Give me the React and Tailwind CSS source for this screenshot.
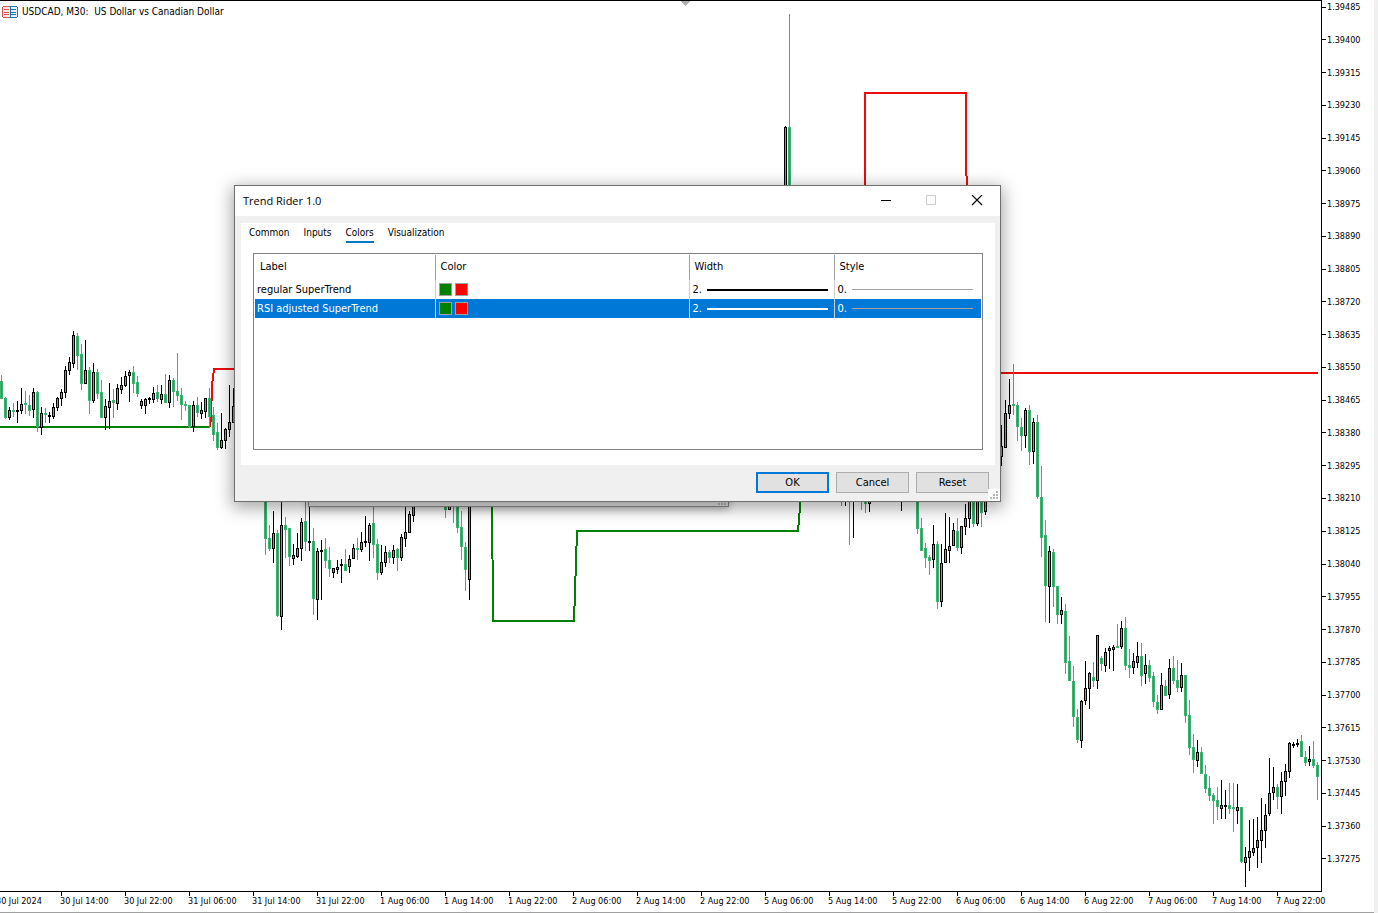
import clsx from 'clsx'

const prices = [
  '1.39485', '1.39400', '1.39315', '1.39230', '1.39145', '1.39060', '1.38975', '1.38890', '1.38805',
  '1.38720', '1.38635', '1.38550', '1.38465', '1.38380', '1.38295', '1.38210', '1.38125', '1.38040',
  '1.37955', '1.37870', '1.37785', '1.37700', '1.37615', '1.37530', '1.37445', '1.37360', '1.37275',
]

const times = [
  '30 Jul 2024', '30 Jul 14:00', '30 Jul 22:00', '31 Jul 06:00', '31 Jul 14:00', '31 Jul 22:00',
  '1 Aug 06:00', '1 Aug 14:00', '1 Aug 22:00', '2 Aug 06:00', '2 Aug 14:00', '2 Aug 22:00',
  '5 Aug 06:00', '5 Aug 14:00', '5 Aug 22:00', '6 Aug 06:00', '6 Aug 14:00', '6 Aug 22:00',
  '7 Aug 06:00', '7 Aug 14:00', '7 Aug 22:00',
]

// x, direction (1 up, 0 down), high, body top, body bottom, low
const candles = [
  [1, 0, 375, 381, 398, 398], [5, 0, 397, 398, 417, 418], [9, 1, 407, 410, 417, 419],
  [13, 0, 403, 410, 411, 416], [17, 1, 401, 410, 411, 422], [21, 1, 388, 404, 410, 413],
  [25, 0, 391, 403, 404, 413], [29, 0, 395, 405, 410, 415], [33, 1, 388, 392, 409, 417],
  [37, 0, 391, 392, 426, 431], [41, 1, 407, 413, 427, 434], [45, 0, 408, 413, 414, 422],
  [49, 1, 412, 415, 416, 422], [53, 1, 403, 407, 416, 418], [57, 1, 397, 398, 407, 410],
  [61, 1, 389, 392, 398, 405], [65, 1, 366, 370, 392, 397], [69, 1, 357, 362, 370, 374],
  [73, 1, 331, 335, 363, 367], [77, 0, 333, 336, 355, 369], [81, 0, 344, 354, 383, 389],
  [85, 1, 340, 370, 383, 383], [89, 0, 367, 370, 400, 413], [93, 1, 363, 372, 400, 402],
  [97, 0, 369, 372, 393, 398], [101, 0, 380, 392, 417, 417], [105, 1, 399, 406, 417, 429],
  [109, 1, 383, 401, 407, 428], [113, 0, 389, 400, 402, 417], [117, 1, 384, 388, 403, 409],
  [121, 1, 377, 385, 389, 393], [125, 1, 371, 376, 385, 386], [129, 1, 370, 372, 375, 401],
  [133, 0, 366, 372, 383, 392], [137, 0, 376, 382, 393, 396], [141, 1, 399, 401, 405, 408],
  [145, 1, 398, 399, 405, 413], [149, 1, 397, 398, 399, 403], [153, 1, 387, 393, 399, 402],
  [157, 0, 385, 392, 398, 401], [161, 1, 385, 394, 399, 403], [165, 0, 374, 394, 402, 402],
  [169, 1, 375, 380, 402, 407], [173, 0, 378, 380, 391, 406], [177, 0, 353, 391, 395, 400],
  [181, 0, 388, 395, 404, 419], [185, 0, 401, 404, 405, 410], [189, 0, 405, 405, 426, 427],
  [193, 1, 401, 405, 426, 431], [197, 0, 397, 405, 412, 416], [201, 1, 402, 410, 413, 418],
  [205, 1, 398, 398, 411, 417], [209, 0, 388, 398, 416, 427], [213, 0, 407, 415, 434, 440],
  [217, 0, 423, 432, 447, 449], [221, 1, 413, 440, 447, 448], [225, 1, 428, 429, 440, 448],
  [229, 1, 385, 422, 429, 436], [233, 1, 388, 406, 422, 422],
  [265, 0, 490, 490, 538, 554], [269, 0, 525, 538, 548, 550], [273, 1, 511, 533, 548, 562],
  [277, 0, 530, 533, 615, 616], [281, 1, 500, 525, 616, 629], [285, 0, 517, 525, 529, 557],
  [289, 0, 528, 528, 556, 565], [293, 1, 544, 555, 558, 564], [297, 1, 533, 548, 556, 557],
  [301, 1, 518, 522, 548, 560], [305, 0, 500, 521, 541, 550], [309, 1, 500, 541, 542, 550],
  [313, 0, 528, 541, 598, 614], [317, 1, 548, 551, 599, 619], [321, 1, 540, 550, 551, 599],
  [325, 0, 538, 549, 560, 567], [329, 0, 547, 560, 568, 576], [333, 1, 568, 568, 572, 577],
  [337, 1, 560, 567, 569, 573], [341, 1, 559, 564, 565, 582], [345, 0, 549, 564, 570, 570],
  [349, 1, 555, 559, 566, 572], [353, 1, 544, 548, 558, 558], [357, 0, 538, 548, 549, 559],
  [361, 1, 532, 542, 549, 551], [365, 1, 516, 541, 542, 546], [369, 1, 523, 525, 542, 560],
  [373, 0, 500, 523, 544, 557], [377, 0, 539, 544, 572, 579], [381, 1, 545, 562, 572, 574],
  [385, 1, 546, 552, 562, 566], [389, 0, 550, 552, 557, 562], [393, 1, 545, 550, 557, 563],
  [397, 0, 548, 549, 557, 570], [401, 1, 534, 537, 557, 560], [405, 1, 500, 532, 538, 546],
  [409, 1, 511, 514, 532, 532], [413, 1, 500, 500, 515, 521], [417, 1, 500, 500, 506, 506],
  [445, 0, 500, 500, 509, 517], [449, 1, 500, 500, 509, 509], [453, 0, 500, 500, 505, 522],
  [457, 0, 500, 500, 527, 532], [461, 0, 511, 527, 546, 559], [465, 0, 542, 547, 569, 590],
  [469, 1, 500, 500, 579, 599],
  [785, 1, 126, 127, 190, 190], [789, 0, 14, 127, 190, 190],
  [841, 0, 495, 495, 496, 505], [845, 1, 495, 495, 496, 505], [849, 0, 495, 495, 496, 544],
  [853, 1, 495, 495, 496, 537], [861, 0, 495, 495, 496, 509], [865, 0, 495, 495, 503, 512],
  [869, 1, 495, 495, 503, 511], [901, 1, 495, 495, 496, 510],
  [917, 0, 495, 495, 528, 533], [921, 0, 518, 528, 550, 550], [925, 0, 543, 548, 557, 567],
  [929, 0, 555, 557, 560, 574], [933, 1, 525, 544, 559, 567], [937, 0, 541, 544, 601, 608],
  [941, 1, 544, 563, 601, 606], [945, 1, 513, 549, 562, 562], [949, 1, 517, 546, 550, 562],
  [953, 1, 523, 530, 545, 545], [957, 0, 518, 531, 547, 550], [961, 1, 526, 526, 547, 553],
  [965, 1, 504, 518, 526, 534], [969, 1, 495, 495, 518, 527], [973, 0, 495, 495, 523, 526],
  [977, 1, 495, 495, 523, 525], [981, 0, 495, 495, 512, 526], [985, 1, 495, 495, 511, 514],
  [1001, 1, 425, 446, 456, 465], [1005, 1, 400, 413, 447, 447], [1009, 1, 379, 405, 413, 418],
  [1013, 0, 364, 404, 405, 414], [1017, 0, 402, 405, 426, 440], [1021, 0, 418, 427, 435, 450],
  [1025, 1, 408, 410, 435, 447], [1029, 0, 405, 410, 451, 464], [1033, 1, 418, 422, 451, 463],
  [1037, 0, 415, 422, 496, 498], [1041, 0, 466, 497, 537, 556], [1045, 0, 520, 535, 585, 621],
  [1049, 1, 546, 551, 586, 622], [1053, 0, 549, 552, 586, 606], [1057, 0, 586, 586, 614, 623],
  [1061, 1, 597, 610, 614, 623], [1065, 0, 604, 611, 662, 673], [1069, 0, 636, 661, 680, 680],
  [1073, 0, 666, 681, 716, 726], [1077, 0, 709, 717, 739, 742], [1081, 1, 700, 701, 740, 747],
  [1085, 1, 661, 688, 700, 704], [1089, 1, 672, 673, 688, 708], [1093, 0, 662, 677, 680, 686],
  [1097, 1, 635, 635, 680, 688], [1101, 0, 656, 658, 663, 670], [1105, 1, 648, 652, 665, 671],
  [1109, 1, 646, 648, 650, 668], [1113, 1, 645, 647, 649, 670], [1117, 0, 624, 646, 647, 647],
  [1121, 1, 621, 628, 646, 648], [1125, 0, 617, 628, 665, 669], [1129, 0, 649, 665, 667, 677],
  [1133, 1, 653, 661, 667, 673], [1137, 1, 642, 656, 662, 667], [1141, 0, 643, 656, 675, 685],
  [1145, 1, 654, 665, 673, 683], [1149, 0, 660, 665, 677, 681], [1153, 0, 672, 676, 701, 706],
  [1157, 0, 695, 702, 709, 713], [1161, 1, 673, 685, 709, 709], [1165, 0, 680, 686, 695, 695],
  [1169, 1, 659, 668, 694, 698], [1173, 0, 656, 668, 680, 683], [1177, 0, 660, 680, 687, 691],
  [1181, 1, 663, 675, 687, 691], [1185, 0, 675, 675, 715, 722], [1189, 0, 700, 715, 747, 754],
  [1193, 0, 734, 747, 759, 772], [1197, 1, 740, 752, 760, 766], [1201, 0, 747, 752, 773, 773],
  [1205, 0, 765, 774, 788, 792], [1209, 0, 776, 788, 795, 800], [1213, 0, 793, 795, 800, 823],
  [1217, 0, 787, 800, 806, 819], [1221, 1, 780, 805, 808, 818], [1225, 1, 790, 805, 806, 818],
  [1229, 0, 783, 805, 808, 813], [1233, 0, 783, 807, 808, 831], [1237, 1, 784, 807, 810, 823],
  [1241, 0, 807, 807, 861, 862], [1245, 1, 847, 857, 862, 886], [1249, 1, 820, 851, 857, 870],
  [1253, 1, 819, 848, 852, 855], [1257, 1, 817, 840, 847, 867], [1261, 1, 798, 830, 840, 862],
  [1265, 1, 804, 815, 830, 847], [1269, 1, 758, 793, 813, 815], [1273, 1, 767, 787, 792, 799],
  [1277, 0, 784, 787, 796, 808], [1281, 1, 772, 781, 796, 813], [1285, 1, 764, 771, 781, 795],
  [1289, 1, 742, 743, 771, 777], [1293, 1, 742, 744, 745, 747], [1297, 1, 739, 743, 744, 746],
  [1301, 0, 735, 741, 756, 756], [1305, 0, 751, 757, 762, 765], [1309, 1, 746, 759, 761, 765],
  [1313, 0, 741, 759, 765, 767], [1317, 0, 762, 765, 776, 799],
]

const plots = [
  { label: 'regular SuperTrend', selected: false },
  { label: 'RSI adjusted SuperTrend', selected: true },
]

function Candle({ data }) {
  const [x, up, high, top, bottom, low] = data
  const height = bottom - top + 1
  return (
    <g fill={up ? '#000000' : '#3cb371'}>
      <rect x={x} y={high} width="1" height={low - high + 1} />
      <rect x={x - 1} y={top} width="3" height={height} />
      {height > 2 && (
        <rect x={x} y={top + 1} width="1" height={height - 2} fill={up ? '#7d9c96' : '#d04a55'} />
      )}
    </g>
  )
}

function Chart() {
  return (
    <svg className="block h-[891px] w-[1321px] shrink-0" viewBox="0 0 1321 891" shapeRendering="crispEdges">
      <path d="M681 1h9l-4.500 5z" fill="#b0b0b0" />
      <g fill="none" strokeWidth="2" strokeLinejoin="round">
        <path d="M0 427H210" stroke="#008000" />
        <path d="M210 427L211 417L212 385L214 369H240" stroke="#ee0a0a" />
        <path d="M492 495L493 621H574L577 531H798L801 495" stroke="#008000" />
        <path d="M865 190V93H966V160L967 190M1000 373H1318" stroke="#ee0a0a" />
      </g>
      {candles.map((c) => (
        <Candle key={c[0]} data={c} />
      ))}
    </svg>
  )
}

function SymbolIcon() {
  return (
    <svg className="h-3 w-4" viewBox="0 0 16 12" fill="none" shapeRendering="crispEdges">
      <path d="M8 .5H1.500L.5 1.500v9l1 1H8" fill="#fdeaea" stroke="#d9534f" />
      <path d="M8 .5h6.500l1 1v9l-1 1H8z" fill="#e6f3fc" stroke="#1976b8" />
      <path d="M2 3.500h5M2 6.500h5M2 8.500h5" stroke="#d9534f" />
      <path d="M9 3.500h5M9 6.500h5M9 8.500h5" stroke="#1976b8" />
    </svg>
  )
}

function Grip({ className }) {
  return (
    <svg className={clsx('h-2 w-2', className)} viewBox="0 0 8 8" fill="#b8b8b8" shapeRendering="crispEdges">
      <path d="M6 0h2v2H6zM3 3h2v2H3zM6 3h2v2H6zM0 6h2v2H0zM3 6h2v2H3zM6 6h2v2H6z" />
    </svg>
  )
}

function Tab({ children, active }) {
  return (
    <button
      type="button"
      role="tab"
      aria-selected={Boolean(active)}
      className={clsx('h-[19px] border-b-2 text-[10px] leading-4', active ? 'border-[#0a78c0]' : 'border-transparent')}
    >
      {children}
    </button>
  )
}

function DialogButton({ children, primary }) {
  return (
    <button
      type="button"
      className={clsx(
        'h-[21px] w-[73px] bg-[#e1e1e1] text-center leading-4',
        primary ? 'border-2 border-[#0078d7]' : 'border border-[#adadad]',
      )}
    >
      {children}
    </button>
  )
}

function Dialog() {
  return (
    <div
      role="dialog"
      aria-label="Trend Rider 1.0"
      className="absolute left-[234px] top-[185px] w-[767px] border border-[#6e6e6e] bg-[#f0f0f0] text-[11px] text-black shadow-[0_4px_16px_2px_rgba(0,0,0,0.35)]"
    >
      <div className="flex h-[30px] items-center justify-between bg-white pl-2">
        <h1 className="font-['Open_Sans','Noto_Sans',sans-serif] text-[11px]">Trend Rider 1.0</h1>
        <div className="flex">
          <button type="button" aria-label="Minimize" className="flex h-[30px] w-[46px] items-center justify-center">
            <svg className="h-3 w-3" viewBox="0 0 12 12" shapeRendering="crispEdges">
              <path d="M2 5h10v1H2z" />
            </svg>
          </button>
          <button type="button" aria-label="Maximize" disabled className="flex h-[30px] w-[46px] items-center justify-center">
            <svg className="h-3 w-3" viewBox="0 0 12 12" fill="none" shapeRendering="crispEdges">
              <path d="M1.500 .5h9v9h-9z" stroke="#ccc" />
            </svg>
          </button>
          <button type="button" aria-label="Close" className="flex h-[30px] w-[46px] items-center justify-center">
            <svg className="h-3 w-3" viewBox="0 0 12 12" fill="none">
              <path d="M1 0l10 10M11 0L1 10" stroke="#000" strokeWidth="1.100" />
            </svg>
          </button>
        </div>
      </div>
      <div className="mr-[5px] ml-1.5 mt-[7px] bg-white px-3 pb-[15px]">
        <div role="tablist" className="-ml-1 flex h-[30px] gap-3.5 pt-px">
          <Tab>Common</Tab>
          <Tab>Inputs</Tab>
          <Tab active>Colors</Tab>
          <Tab>Visualization</Tab>
        </div>
        <div className="h-[197px] w-[730px] border border-[#828282] p-px">
          <table className="w-full table-fixed border-collapse text-left">
            <colgroup>
              <col className="w-[180px]" />
              <col className="w-[254px]" />
              <col className="w-[145px]" />
              <col />
            </colgroup>
            <thead>
              <tr className="h-[25px]">
                <th className="border-r border-[#a0a0a0] pl-[5px] font-normal">Label</th>
                <th className="border-r border-[#a0a0a0] pl-[5px] font-normal">Color</th>
                <th className="border-r border-[#a0a0a0] pl-[5px] font-normal">Width</th>
                <th className="pl-[5px] font-normal">Style</th>
              </tr>
            </thead>
            <tbody>
              {plots.map((plot) => (
                <tr key={plot.label} className={clsx('h-[19px] leading-4', plot.selected && 'bg-[#0078d7] text-white')}>
                  <td className="border-r border-[#d0d0d0] py-0 pl-0.5">{plot.label}</td>
                  <td className="border-r border-[#d0d0d0] pl-[3px]">
                    <div className="flex gap-[3px]">
                      <span className="size-[13px] border border-[#a0a0a0] bg-[#008000]" />
                      <span className="size-[13px] border border-[#a0a0a0] bg-[#ff0000]" />
                    </div>
                  </td>
                  <td className="border-r border-[#d0d0d0] pr-1.5 pl-[3px]">
                    <div className="flex items-center">
                      <span className="w-3.5">2.</span>
                      <span className={clsx('h-0.5 flex-1', plot.selected ? 'bg-white' : 'bg-black')} />
                    </div>
                  </td>
                  <td className="pr-2 pl-[3px]">
                    <div className="flex items-center">
                      <span className="w-3.5">0.</span>
                      <span className="h-px flex-1 bg-[#a0a0a0]" />
                    </div>
                  </td>
                </tr>
              ))}
            </tbody>
          </table>
        </div>
      </div>
      <div className="flex h-9 justify-end gap-[7px] pt-[7px] pr-[11px]">
        <DialogButton primary>OK</DialogButton>
        <DialogButton>Cancel</DialogButton>
        <DialogButton>Reset</DialogButton>
      </div>
      <div className="absolute right-0 bottom-0 bg-white p-0.5">
        <Grip />
      </div>
    </div>
  )
}

export default function App() {
  return (
    <main className="relative flex h-screen overflow-hidden bg-white font-['DejaVu_Sans_Condensed','DejaVu_Sans',sans-serif] text-black">
      <div className="flex min-w-0 flex-1 flex-col border-b border-[#a0a0a0]">
        <div className="flex min-h-0 flex-1">
          <section aria-label="USDCAD chart" className="relative min-w-0 flex-1 overflow-hidden border-y border-black">
            <div className="absolute top-[5px] left-0.5 flex items-center gap-1 text-[10px] leading-3">
              <SymbolIcon />
              <span className="whitespace-pre">USDCAD, M30:  US Dollar vs Canadian Dollar</span>
            </div>
            <div className="-mt-px">
              <Chart />
            </div>
          </section>
          <ul className="flex w-[53px] flex-col justify-between border-l border-black pt-px pb-[27px] text-[9px] leading-3">
            {prices.map((price) => (
              <li key={price} className="flex items-center gap-px">
                <span className="h-px w-1 bg-black" />
                {price}
              </li>
            ))}
          </ul>
        </div>
        <ul className="-ml-1 flex h-5 text-[9px] leading-[10px] whitespace-nowrap">
          {times.map((time) => (
            <li key={time} className="w-16 shrink-0">
              <span className="ml-px block h-1 w-px bg-black" />
              {time}
            </li>
          ))}
        </ul>
      </div>
      <div className="w-1 bg-[#f0f0f0]" />
      <div className="absolute top-[480px] left-[308px] h-[27px] w-[421px] border border-[#8a8a8a] bg-[#e4e4e4] shadow-[0_2px_8px_rgba(0,0,0,0.3)]">
        <Grip className="absolute right-0.5 bottom-px" />
      </div>
      <Dialog />
    </main>
  )
}
